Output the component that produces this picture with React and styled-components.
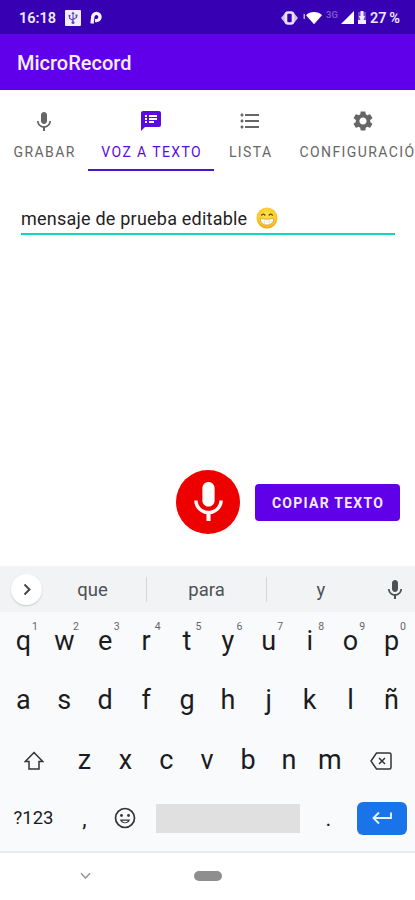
import React from 'react'
import styled, { createGlobalStyle } from 'styled-components'
import {
  MdMic,
  MdKeyboardVoice,
  MdSpeakerNotes,
  MdFormatListBulleted,
  MdSettings
} from 'react-icons/md'

const GlobalStyle = createGlobalStyle`
  * { box-sizing: border-box; }
  body {
    margin: 0;
    background: #fff;
    font-family: Roboto, "Liberation Sans", sans-serif;
    overflow: hidden;
  }
  svg { display: block; flex: none; }
`

const Screen = styled.div`
  width: 415px;
  height: 900px;
  display: flex;
  flex-direction: column;
  overflow: hidden;
  background: #fff;
`
const StatusBar = styled.div`
  height: 34px;
  flex: none;
  display: flex;
  align-items: center;
  justify-content: space-between;
  padding: 1px 14px 0 19px;
  background: #3800b3;
  color: #eeeaff;
  font-size: 14.5px;
  font-weight: 600;
`
const StatusGroup = styled.div`
  display: flex;
  align-items: center;
`
const Clock = styled.span`
  width: 46px;
  padding-top: 1px;
`
const Network = styled.span`
  width: 12px;
  margin: -7px 3px 0 4px;
  font-size: 9.5px;
  color: #7f5bd0;
`
const Battery = styled.span`
  margin-left: 4px;
  padding-top: 1px;
  width: 31px;
  white-space: nowrap;
  font-size: 14.5px;
  word-spacing: -1px;
`
const AppBar = styled.header`
  height: 56px;
  flex: none;
  display: flex;
  align-items: center;
  padding: 1px 17px 0;
  background: #6000ea;
  color: #f5edff;
  font-size: 20px;
  font-weight: 500;
`
const Tabs = styled.nav`
  height: 81px;
  flex: none;
  display: flex;
  overflow: hidden;
`
const Tab = styled.div`
  width: ${p => p.$width}px;
  flex: none;
  display: flex;
  flex-direction: column;
  align-items: center;
  padding-top: 19px;
  gap: 11px;
  color: ${p => (p.$active ? '#5a0be0' : '#666')};
  border-bottom: 2px solid ${p => (p.$active ? '#4a18cc' : 'transparent')};
`
const TabLabel = styled.span`
  font-size: 14px;
  line-height: 16px;
  letter-spacing: 1.4px;
  margin-right: -1.4px;
  white-space: nowrap;
`
const Content = styled.main`
  height: 395px;
  flex: none;
  display: flex;
  flex-direction: column;
  justify-content: space-between;
  padding: 36px 15px 32px 21px;
`
const Field = styled.div`
  width: 374px;
  height: 28px;
  display: flex;
  align-items: flex-start;
  gap: 9px;
  border-bottom: 2px solid #16d3bd;
  color: #222;
  font-size: 18px;
  line-height: 24px;
  letter-spacing: 0.22px;
`
const Actions = styled.div`
  display: flex;
  align-items: center;
  justify-content: flex-end;
  gap: 15px;
`
const RecordButton = styled.div`
  width: 64px;
  height: 64px;
  display: flex;
  align-items: center;
  justify-content: center;
  border-radius: 50%;
  background: #ee0000;
  color: #fff;
`
const CopyButton = styled.div`
  width: 145px;
  height: 37px;
  display: flex;
  align-items: center;
  justify-content: center;
  padding: 2px 0 0 1px;
  border-radius: 4px;
  background: #5f00e8;
  color: #f2eaff;
  font-size: 14px;
  font-weight: 700;
  letter-spacing: 1.25px;
  white-space: nowrap;
`
const Suggestions = styled.div`
  height: 46px;
  flex: none;
  display: flex;
  align-items: center;
  padding-left: 11px;
  background: #f1f3f4;
  color: #4c5154;
`
const Expand = styled.div`
  width: 31px;
  height: 31px;
  flex: none;
  display: flex;
  align-items: center;
  justify-content: center;
  border-radius: 50%;
  background: #fff;
  box-shadow: 0 1px 2px rgba(0, 0, 0, 0.18);
`
const Suggestion = styled.div`
  width: ${p => p.$width}px;
  height: 25px;
  display: flex;
  align-items: center;
  justify-content: center;
  padding: 2px ${p => p.$shift || 0}px 0 0;
  border-right: ${p => (p.$last ? 0 : 1)}px solid #d4d7d9;
  font-size: 18.5px;
`
const Keyboard = styled.div`
  height: 241px;
  flex: none;
  padding: 0 3px;
  background: #f8fafc;
  border-bottom: 2px solid #e9ebec;
`
const KeyRow = styled.div`
  height: ${p => p.$height || 59.5}px;
  display: flex;
  align-items: center;
`
const Key = styled.div`
  position: relative;
  width: ${p => p.$width || 40.9}px;
  flex: none;
  display: flex;
  align-items: center;
  justify-content: center;
  height: 100%;
  padding-bottom: ${p => p.$lift || 0}px;
  color: #1c1c1e;
  font-size: ${p => p.$size || 27}px;
`
const Hint = styled.span`
  position: absolute;
  top: 8px;
  left: 29px;
  color: #666;
  font-size: 10.5px;
`
const Space = styled.div`
  width: 144px;
  height: 29px;
  flex: none;
  background: #e0e0e0;
`
const Enter = styled.div`
  width: 50px;
  height: 33px;
  flex: none;
  display: flex;
  align-items: center;
  justify-content: center;
  border-radius: 6px;
  background: #1a73e8;
`
const NavBar = styled.div`
  flex: 1;
  display: flex;
  align-items: center;
  padding: 0 0 1px 80px;
  gap: 103px;
`
const Pill = styled.div`
  width: 28px;
  height: 10px;
  border-radius: 5px;
  background: #8e8e8e;
`

const UsbIcon = () => (
  <svg width="16" height="16" viewBox="0 0 16 16">
    <rect width="16" height="16" rx="1" fill="#f1edff" />
    <g fill="none" stroke="#6542c0" strokeWidth="1.1">
      <path d="M8 3v9M4.5 6v2.2L8 10.5M11.5 5.5v2L8 9.5" />
    </g>
    <path d="M8 1.500l1.700 2.500H6.300z" fill="#6542c0" />
    <circle cx="8" cy="12.600" r="1.500" fill="#6542c0" />
    <circle cx="4.500" cy="5.800" r="1.100" fill="#6542c0" />
    <rect x="10.500" y="4.500" width="2" height="2" fill="#6542c0" />
  </svg>
)

const ParkingIcon = () => (
  <svg width="12" height="13" viewBox="0 0 12 13" style={{ marginLeft: 9 }}>
    <path
      d="M2 12.500L2.800 6a3.600 3.600 0 1 1 3.500 3.600H5"
      fill="none"
      stroke="#f6f3ff"
      strokeWidth="3.400"
    />
  </svg>
)

const VibrateIcon = () => (
  <svg width="17" height="14" viewBox="0 0 17 14">
    <path d="M0 7l4-5v10zM17 7l-4-5v10z" fill="#cbbcf3" />
    <rect x="5" y="1.500" width="7" height="11" rx="2" fill="none" stroke="#e9e2ff" strokeWidth="2.600" />
  </svg>
)

const WifiIcon = () => (
  <svg width="19" height="14" viewBox="0 0 19 14" style={{ marginLeft: 5 }}>
    <path d="M.5 3h1.500v5H.5z" fill="#bba8ee" />
    <path d="M3 4.200C7-.1 15-.1 19 4.200L11 13.300z" fill="#fff" />
  </svg>
)

const SignalIcon = () => (
  <svg width="13" height="13" viewBox="0 0 13 13">
    <path d="M13 0v13H0z" fill="#fff" />
  </svg>
)

const ChargeIcon = () => (
  <svg width="8" height="13" viewBox="0 0 8 13" style={{ marginLeft: 4 }}>
    <path d="M0 1h8v11H0z" fill="#6f49cf" />
    <path d="M2.500 0h3v5H7L5.500 9H8v4H0V9h2.500L1 5h1.500z" fill="#f1ebff" />
  </svg>
)

const GrinEmoji = () => (
  <svg width="22" height="22" viewBox="0 0 22 22">
    <defs>
      <radialGradient id="face" cx="50%" cy="40%" r="60%">
        <stop offset="0" stopColor="#ffe447" />
        <stop offset=".7" stopColor="#fccb2e" />
        <stop offset="1" stopColor="#eda51b" />
      </radialGradient>
    </defs>
    <circle cx="11" cy="11" r="10.500" fill="url(#face)" />
    <path d="M5.300 8.500q2-2.600 4 0M12.700 8.500q2-2.600 4 0" fill="none" stroke="#5c4220" strokeWidth="1.300" />
    <path
      d="M4.500 11.500q6.500 1.400 13 0c.8 3.800-2.500 6.500-6.500 6.500s-7.300-2.700-6.500-6.500z"
      fill="#fff"
      stroke="#d69a2c"
      strokeWidth=".8"
    />
    <path d="M4.800 14.500q6.200 1.300 12.400 0M8.500 12v5.500M13.500 12v5.500" fill="none" stroke="#e1d6bd" strokeWidth=".6" />
  </svg>
)

const ChevronIcon = () => (
  <svg width="10" height="13" viewBox="0 0 10 13">
    <path d="M2.500 1.500l5 5-5 5" fill="none" stroke="#444" strokeWidth="1.900" />
  </svg>
)

const ShiftIcon = () => (
  <svg width="20" height="20" viewBox="0 0 20 20">
    <path d="M10 1.500L18.700 10.500H15V18H5v-7.500H1.300z" fill="none" stroke="#333" strokeWidth="1.500" />
  </svg>
)

const BackspaceIcon = () => (
  <svg width="22" height="18" viewBox="0 0 22 18">
    <path d="M6.500 1H19.500Q21 1 21 2.500v13Q21 17 19.500 17H6.500L1 9z" fill="none" stroke="#333" strokeWidth="1.500" />
    <path d="M9 6l6 6M15 6l-6 6" stroke="#333" strokeWidth="1.500" />
  </svg>
)

const SmileIcon = () => (
  <svg width="22" height="22" viewBox="0 0 22 22">
    <circle cx="11" cy="11" r="9.500" fill="none" stroke="#333" strokeWidth="1.700" />
    <circle cx="7.500" cy="8.500" r="1.400" fill="#333" />
    <circle cx="14.500" cy="8.500" r="1.400" fill="#333" />
    <path d="M6 12.500h10a5.200 5.200 0 0 1-10 0zM8 13.800a3.600 3.600 0 0 0 6 0z" fill="#333" fillRule="evenodd" />
  </svg>
)

const EnterIcon = () => (
  <svg width="20" height="14" viewBox="0 0 20 14">
    <path d="M19 1.500V7H1.800M7 1.500L1.500 7 7 12.500" fill="none" stroke="#e8f2ff" strokeWidth="1.900" />
  </svg>
)

const DownIcon = () => (
  <svg width="11" height="8" viewBox="0 0 11 8">
    <path d="M1 1.200l4.500 4.800L10 1.200" fill="none" stroke="#999" strokeWidth="1.600" />
  </svg>
)

const tabs = [
  { label: 'GRABAR', width: 88, icon: MdKeyboardVoice },
  { label: 'VOZ A TEXTO', width: 126, icon: MdSpeakerNotes, active: true },
  { label: 'LISTA', width: 72, icon: MdFormatListBulleted },
  { label: 'CONFIGURACIÓN', width: 153, icon: MdSettings }
]

const App = () => (
  <>
    <GlobalStyle />
    <Screen>
      <StatusBar>
        <StatusGroup>
          <Clock>16:18</Clock>
          <UsbIcon />
          <ParkingIcon />
        </StatusGroup>
        <StatusGroup>
          <VibrateIcon />
          <WifiIcon />
          <Network>3G</Network>
          <SignalIcon />
          <ChargeIcon />
          <Battery>27 %</Battery>
        </StatusGroup>
      </StatusBar>
      <AppBar>MicroRecord</AppBar>
      <Tabs>
        {tabs.map(({ label, width, icon: Icon, active }) => (
          <Tab key={label} $width={width} $active={active}>
            <Icon size={24} />
            <TabLabel>{label}</TabLabel>
          </Tab>
        ))}
      </Tabs>
      <Content>
        <Field>
          <span>mensaje de prueba editable</span>
          <GrinEmoji />
        </Field>
        <Actions>
          <RecordButton>
            <MdMic size={49} />
          </RecordButton>
          <CopyButton>COPIAR TEXTO</CopyButton>
        </Actions>
      </Content>
      <Suggestions>
        <Expand>
          <ChevronIcon />
        </Expand>
        <Suggestion $width={105} $shift={3}>que</Suggestion>
        <Suggestion $width={120}>para</Suggestion>
        <Suggestion $width={108} $last>y</Suggestion>
        <MdKeyboardVoice size={24} style={{ marginLeft: 8 }} />
      </Suggestions>
      <Keyboard>
        <KeyRow>
          {[...'qwertyuiop'].map((letter, i) => (
            <Key key={letter} $lift={2}>
              {letter}
              <Hint>{(i + 1) % 10}</Hint>
            </Key>
          ))}
        </KeyRow>
        <KeyRow>
          {[...'asdfghjklñ'].map(letter => (
            <Key key={letter} $lift={2}>{letter}</Key>
          ))}
        </KeyRow>
        <KeyRow>
          <Key $width={61}><ShiftIcon /></Key>
          {[...'zxcvbnm'].map(letter => (
            <Key key={letter} $lift={2}>{letter}</Key>
          ))}
          <Key $width={61}><BackspaceIcon /></Key>
        </KeyRow>
        <KeyRow $height={55}>
          <Key $width={61} $size={18.5}>?123</Key>
          <Key $size={22}>,</Key>
          <Key><SmileIcon /></Key>
          <Key $width={10} />
          <Space />
          <Key $width={57} $size={22}>.</Key>
          <Enter>
            <EnterIcon />
          </Enter>
        </KeyRow>
      </Keyboard>
      <NavBar>
        <DownIcon />
        <Pill />
      </NavBar>
    </Screen>
  </>
)

export default App
